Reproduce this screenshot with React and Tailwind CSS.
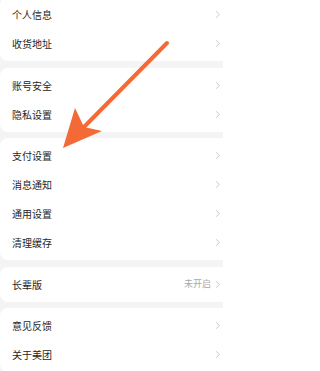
import React from 'react';

const groups = [
  [{ label: '个人信息' }, { label: '收货地址' }],
  [{ label: '账号安全' }, { label: '隐私设置' }],
  [{ label: '支付设置' }, { label: '消息通知' }, { label: '通用设置' }, { label: '清理缓存' }],
  [{ label: '长辈版', value: '未开启' }],
  [{ label: '意见反馈' }, { label: '关于美团' }],
];

const Chevron = () => (
  <svg width="4" height="7" viewBox="0 0 4 7" fill="none" className="shrink-0">
    <path d="M0.6 0.6 L3.2 3.5 L0.6 6.4" stroke="#c4c4c4" strokeWidth="0.9" strokeLinecap="round" strokeLinejoin="round" />
  </svg>
);

const Row = ({ label, value }) => (
  <div className="h-[29px] flex items-center pl-[12px] pr-[13px]">
    <span className="flex-1 text-[10px] text-[#262626]">{label}</span>
    {value && <span className="text-[9px] text-[#a8a8a8] mr-[5px]">{value}</span>}
    <Chevron />
  </div>
);

export default function App() {
  return (
    <div
      className="relative w-[223px] h-[371px] overflow-hidden bg-[#f4f4f4]"
      style={{ fontFamily: '"Noto Sans CJK SC", "Noto Sans", sans-serif' }}
    >
      <div className="flex flex-col gap-[6.5px] -mt-[3px] w-[233px]">
        {groups.map((rows, i) => (
          <div key={i} className="bg-white rounded-[8px] py-[3px]">
            {rows.map((r) => (
              <Row key={r.label} {...r} />
            ))}
          </div>
        ))}
      </div>

      {/* annotation arrow */}
      <svg className="absolute inset-0 pointer-events-none" width="223" height="371" viewBox="0 0 223 371">
        <line x1="167" y1="43" x2="82" y2="129" stroke="#f36a36" strokeWidth="4" strokeLinecap="round" />
        <path d="M63 148 L75 108 L84 127 L102 131 Z" fill="#f36a36" />
      </svg>
    </div>
  );
}
